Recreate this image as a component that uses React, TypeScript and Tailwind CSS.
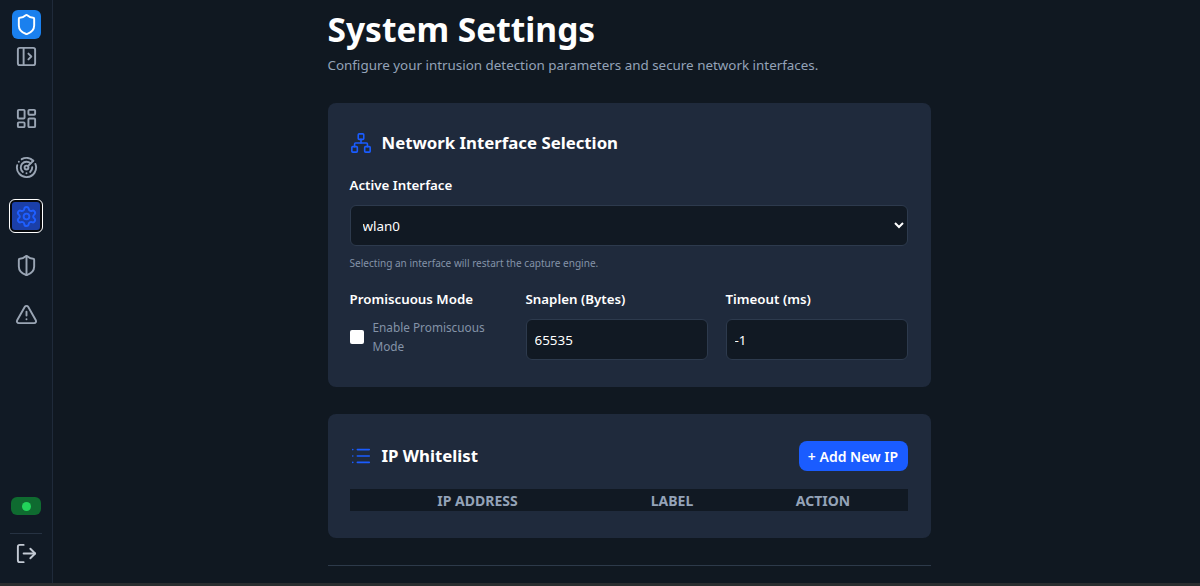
import { useState } from "react";
import {
  LayoutDashboard,
  List,
  LogOut,
  Network,
  PanelLeftOpen,
  Radar,
  Settings,
  Shield,
  ShieldHalf,
  TriangleAlert,
} from "lucide-react";

const navItems = [
  { icon: LayoutDashboard, active: false },
  { icon: Radar, active: false },
  { icon: Settings, active: true },
  { icon: ShieldHalf, active: false },
  { icon: TriangleAlert, active: false },
];

function Sidebar() {
  return (
    <aside className="flex h-full w-[53px] shrink-0 flex-col items-center border-r border-[#1f2a3a] bg-[#111a25] pt-[10px] pb-[18px]">
      <div className="flex h-[29px] w-[29px] items-center justify-center rounded-md bg-[#1a80ee]">
        <Shield size={23} strokeWidth={2} className="text-white" />
      </div>
      <PanelLeftOpen size={23} strokeWidth={2} className="mt-[6px] text-[#9aa5b4]" />
      <nav className="mt-[33px] flex flex-col items-center gap-[15px]">
        {navItems.map(({ icon: Icon, active }, i) => (
          <div
            key={i}
            className={
              active
                ? "m-[1px] flex h-[32px] w-[32px] items-center justify-center rounded-[5px] border-2 border-[#07090d] bg-[#1b3fa8] text-[#1f5fff] outline outline-[1.5px] outline-white"
                : "flex h-[34px] w-[34px] items-center justify-center text-[#9aa5b4]"
            }
          >
            <Icon size={23} strokeWidth={2} />
          </div>
        ))}
      </nav>
      <div className="mt-auto flex h-[18px] w-[30px] items-center justify-center rounded-md bg-[#0f6b30]">
        <span className="h-[9px] w-[9px] rounded-full bg-[#22d45a]" />
      </div>
      <div className="mt-[18px] h-px w-[32px] bg-[#263242]" />
      <LogOut size={23} strokeWidth={2} className="mt-[8px] text-[#c3cad4]" />
    </aside>
  );
}

function Card({ children, className }: { children: React.ReactNode; className: string }) {
  return <section className={`rounded-lg bg-[#1f2a3c] pr-[23px] pl-[22px] ${className}`}>{children}</section>;
}

const fieldClass =
  "h-[41px] w-full rounded-md border border-[#2d3a4d] bg-[#111923] px-[8px] text-[13.4px] text-white outline-none";
const labelClass = "text-[13.3px] leading-[20px] font-semibold";

export default function App() {
  const [iface, setIface] = useState("wlan0");
  const [snaplen, setSnaplen] = useState("65535");
  const [timeout, setTimeoutValue] = useState("-1");

  return (
    <div
      className="flex h-[586px] w-[1200px] flex-col overflow-hidden bg-[#101821] text-white"
      style={{ fontFamily: '"Noto Sans", "Open Sans", sans-serif' }}
    >
      <div className="flex h-[583px] shrink-0">
        <Sidebar />
        <main className="min-w-0 flex-1 pl-[274.5px]">
          <div className="w-[603px]">
            <h1 className="mt-[5px] text-[33.5px] leading-[48px] font-bold">System Settings</h1>
            <p className="mt-[1px] text-[13.4px] leading-[22px] text-[#94a3b8]">
              Configure your intrusion detection parameters and secure network interfaces.
            </p>

            <Card className="mt-[27px] h-[284px] pt-[26px]">
              <div className="flex items-center gap-[10px]">
                <Network size={22} strokeWidth={1.75} className="text-[#1a5cff]" />
                <h2 className="text-[16.8px] leading-[28px] font-bold">Network Interface Selection</h2>
              </div>
              <label className={`mt-[18px] block ${labelClass}`}>Active Interface</label>
              <select
                value={iface}
                onChange={(e) => setIface(e.target.value)}
                className={`${fieldClass} mt-[10px] [color-scheme:dark]`}
              >
                <option>wlan0</option>
                <option>eth0</option>
              </select>
              <p className="mt-[7px] text-[10.05px] leading-[20px] text-[#8493a8]">
                Selecting an interface will restart the capture engine.
              </p>
              <div className="mt-[16px] grid grid-cols-[158px_182px_182px] gap-x-[18px]">
                <div>
                  <div className={labelClass}>Promiscuous Mode</div>
                  <label className="mt-[9px] flex items-center gap-[9px]">
                    <input type="checkbox" className="h-[14px] w-[14px] shrink-0 appearance-none rounded-[2px] bg-white" />
                    <span className="text-[11.8px] leading-[19px] text-[#8493a8]">Enable Promiscuous Mode</span>
                  </label>
                </div>
                <div>
                  <div className={labelClass}>Snaplen (Bytes)</div>
                  <input value={snaplen} onChange={(e) => setSnaplen(e.target.value)} className={`${fieldClass} mt-[10px]`} />
                </div>
                <div>
                  <div className={labelClass}>Timeout (ms)</div>
                  <input value={timeout} onChange={(e) => setTimeoutValue(e.target.value)} className={`${fieldClass} mt-[10px]`} />
                </div>
              </div>
            </Card>

            <Card className="mt-[27px] h-[124px] pt-[27px]">
              <div className="flex items-center justify-between">
                <div className="flex items-center gap-[10px]">
                  <List size={22} strokeWidth={1.75} className="text-[#1a5cff]" />
                  <h2 className="text-[16.8px] leading-[28px] font-bold">IP Whitelist</h2>
                </div>
                <button className="h-[30px] w-[109px] rounded-lg bg-[#1a5cff] text-[14px] font-semibold text-white">
                  + Add New IP
                </button>
              </div>
              <table className="mt-[18px] w-full table-fixed text-[14px] text-[#94a3b8]">
                <thead>
                  <tr className="h-[22px] bg-[#111923] uppercase">
                    <th className="w-[256px] text-center font-bold">IP Address</th>
                    <th className="w-[133px] text-center font-bold">Label</th>
                    <th className="text-center font-bold">Action</th>
                  </tr>
                </thead>
              </table>
            </Card>

            <hr className="mt-[27px] border-[#2d3a4a]" />
          </div>
        </main>
      </div>
      <div className="h-[3px] shrink-0 bg-[#2a2d2f]" />
    </div>
  );
}
